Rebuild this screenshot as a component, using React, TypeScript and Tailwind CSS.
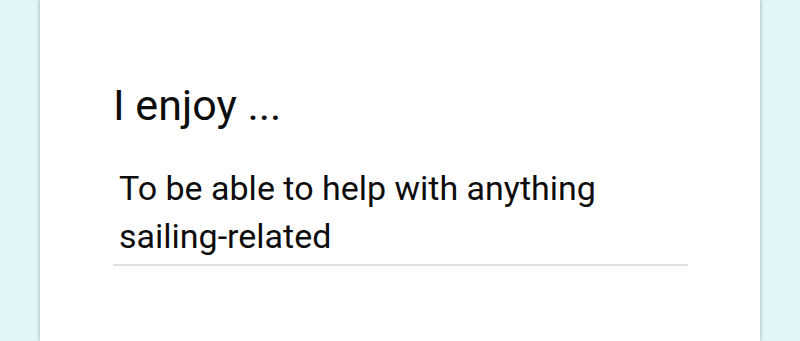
import React from 'react';

export default function App() {
  return (
    <div
      className="w-[800px] h-[341px] bg-[#e0f6f9] flex justify-center overflow-hidden"
      style={{ fontFamily: 'Roboto, "Liberation Sans", sans-serif' }}
    >
      <div className="w-[720px] h-full bg-white shadow-[0_0_4px_rgba(0,60,70,0.4)] pl-[73px] pr-[72px] pt-[81px]">
        <h2 className="text-[43px] leading-[48px] text-[#0d0d0d] font-normal">I enjoy ...</h2>
        <div className="mt-[35px] border-b-2 border-[#e0e0e0] pl-[6px] pr-[6px] pb-[4px]">
          <p className="text-[34px] leading-[48px] text-[#0d0d0d]">
            To be able to help with anything sailing-related
          </p>
        </div>
      </div>
    </div>
  );
}
